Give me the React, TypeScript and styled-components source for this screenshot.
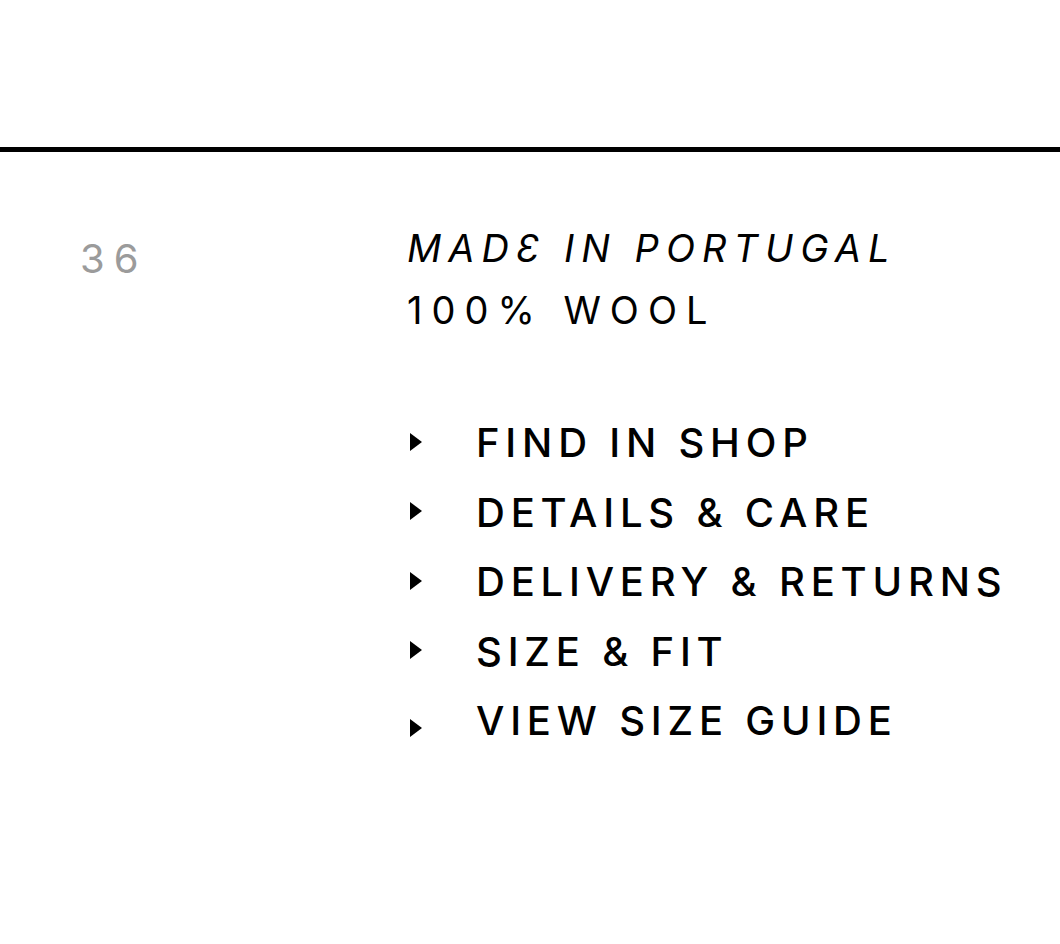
import styled, { createGlobalStyle } from 'styled-components';

const GlobalStyle = createGlobalStyle`
  html, body {
    margin: 0;
    padding: 0;
    background: #fff;
  }
  body {
    font-family: Inter, "Liberation Sans", Arial, sans-serif;
    color: #000;
  }
`;

const Page = styled.div`
  width: 100%;
  min-height: 944px;
  padding-top: 147px;
  box-sizing: border-box;
`;

const Divider = styled.hr`
  margin: 0;
  border: 0;
  height: 5px;
  background: #000;
`;

const Content = styled.section`
  display: grid;
  grid-template-columns: 407px 1fr;
  padding-top: 65px;
`;

const PageNumber = styled.div`
  padding-left: 80px;
  padding-top: 18px;
  font-size: 40px;
  line-height: 48px;
  letter-spacing: 9px;
  color: #9b9b9b;
`;

const Info = styled.div`
  display: flex;
  flex-direction: column;
`;

const InfoLine = styled.p<{ $italic?: boolean; $spacing: number }>`
  margin: 0;
  font-size: 38px;
  line-height: 62px;
  letter-spacing: ${({ $spacing }) => $spacing}px;
  font-style: ${({ $italic }) => ($italic ? 'italic' : 'normal')};
  white-space: nowrap;
`;

const Menu = styled.ul`
  list-style: none;
  margin: 67px 0 0;
  padding: 0;
`;

const MenuItem = styled.li`
  display: grid;
  grid-template-columns: 69px auto;
  align-items: center;
  height: 69.5px;
`;

const Arrow = styled.svg<{ $drop?: boolean }>`
  display: block;
  width: 14px;
  height: 20px;
  margin-left: 2px;
  transform: translateY(${({ $drop }) => ($drop ? '7px' : '-1px')});
`;

const Label = styled.span`
  font-size: 40px;
  font-weight: 500;
  letter-spacing: 5.8px;
  white-space: nowrap;
`;

const items = [
  'FIND IN SHOP',
  'DETAILS & CARE',
  'DELIVERY & RETURNS',
  'SIZE & FIT',
  'VIEW SIZE GUIDE',
];

function App() {
  return (
    <Page>
      <GlobalStyle />
      <Divider />
      <Content>
        <PageNumber>36</PageNumber>
        <Info>
          <InfoLine $italic $spacing={7}>
            MADƐ IN PORTUGAL
          </InfoLine>
          <InfoLine $spacing={9}>100% WOOL</InfoLine>
          <Menu>
            {items.map((label, i) => (
              <MenuItem key={label}>
                <Arrow viewBox="0 0 14 20" $drop={i === items.length - 1}>
                  <path d="M1 1 L13 10 L1 19 Z" fill="#000" />
                </Arrow>
                <Label>{label}</Label>
              </MenuItem>
            ))}
          </Menu>
        </Info>
      </Content>
    </Page>
  );
}

export default App;
